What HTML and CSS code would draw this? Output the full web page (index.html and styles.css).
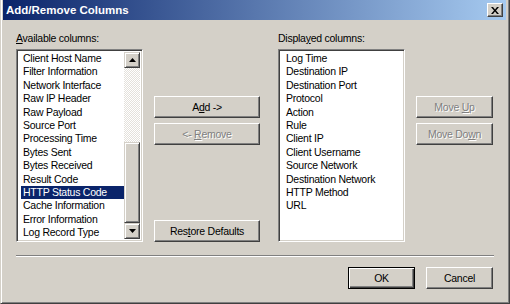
FILE: index.html
```html
<!DOCTYPE html>
<html>
<head>
<meta charset="utf-8">
<link rel="stylesheet" href="styles.css">
</head>
<body>
<div class="window">
  <div class="titlebar">
    <span class="title">Add/Remove Columns</span>
    <span class="close"><svg width="8" height="7" viewBox="0 0 8 7"><path d="M0 0h2l2 2.5L6 0h2L5 3.5 8 7H6L4 4.5 2 7H0l3-3.5z" fill="#000"/></svg></span>
  </div>
  <div class="body">
    <div class="columns">
      <div class="col">
        <div class="label"><u>A</u>vailable columns:</div>
        <div class="listbox">
          <ul class="items">
            <li>Client Host Name</li>
            <li>Filter Information</li>
            <li>Network Interface</li>
            <li>Raw IP Header</li>
            <li>Raw Payload</li>
            <li>Source Port</li>
            <li>Processing Time</li>
            <li>Bytes Sent</li>
            <li>Bytes Received</li>
            <li>Result Code</li>
            <li class="sel">HTTP Status Code</li>
            <li>Cache Information</li>
            <li>Error Information</li>
            <li>Log Record Type</li>
          </ul>
          <div class="scrollbar">
            <div class="sbtn"><svg width="7" height="4" viewBox="0 0 7 4"><path d="M3.5 0L7 4H0z" fill="#000"/></svg></div>
            <div class="track">
              <div class="thumb"></div>
            </div>
            <div class="sbtn"><svg width="7" height="4" viewBox="0 0 7 4"><path d="M0 0h7L3.5 4z" fill="#000"/></svg></div>
          </div>
        </div>
      </div>
      <div class="mid">
        <button class="btn">A<u>d</u>d -&gt;</button>
        <button class="btn disabled">&lt;- <u>R</u>emove</button>
        <button class="btn restore">Res<u>t</u>ore Defaults</button>
      </div>
      <div class="col">
        <div class="label">Displa<u>y</u>ed columns:</div>
        <div class="listbox">
          <ul class="items right">
            <li>Log Time</li>
            <li>Destination IP</li>
            <li>Destination Port</li>
            <li>Protocol</li>
            <li>Action</li>
            <li>Rule</li>
            <li>Client IP</li>
            <li>Client Username</li>
            <li>Source Network</li>
            <li>Destination Network</li>
            <li>HTTP Method</li>
            <li>URL</li>
          </ul>
        </div>
      </div>
      <div class="side">
        <button class="btn disabled">Move <u>U</u>p</button>
        <button class="btn disabled">Move Do<u>w</u>n</button>
      </div>
    </div>
    <div class="separator"></div>
    <div class="footer">
      <button class="btn default">OK</button>
      <button class="btn">Cancel</button>
    </div>
  </div>
</div>
</body>
</html>
```

FILE: styles.css
```css
* { box-sizing: border-box; }
html, body { margin: 0; padding: 0; background: #d4d0c8; }
body { width: 510px; height: 304px; overflow: hidden; }

.window {
  width: 510px;
  height: 304px;
  background: #d4d0c8;
  border-left: 1px solid #d4d0c8;
  border-right: 1px solid #404040;
  border-bottom: 1px solid #404040;
  box-shadow: inset 1px 0 #fff, inset -1px -1px #808080;
  padding: 0 3px 3px 2px;
  font-family: "Liberation Sans", Arial, sans-serif;
  font-size: 10.5px;
  letter-spacing: -0.25px;
  color: #000;
  display: flex;
  flex-direction: column;
}

.titlebar {
  height: 20px;
  background: linear-gradient(to right, #0a246a, #a6caf0);
  display: flex;
  align-items: center;
  justify-content: space-between;
  padding: 0 3px 0 3px;
}
.title {
  color: #fff;
  font-weight: bold;
  font-size: 11.5px;
  letter-spacing: 0;
}
.close {
  width: 16px;
  height: 14px;
  background: #d4d0c8;
  border: 1px solid;
  border-color: #fff #404040 #404040 #fff;
  box-shadow: inset -1px -1px #808080;
  display: flex;
  align-items: center;
  justify-content: center;
}

.body {
  padding: 12px 0 0 13px;
  display: flex;
  flex-direction: column;
}

.columns {
  display: grid;
  grid-template-columns: 127px 113px 127px 77px;
  column-gap: 11px;
}

.col { display: flex; flex-direction: column; }
.label {
  height: 13px;
  line-height: 13px;
  margin-bottom: 4px;
}

.listbox {
  height: 193px;
  background: #fff;
  border: 1px solid;
  border-color: #808080 #fff #fff #808080;
  box-shadow: inset 1px 1px #404040, inset -1px -1px #d4d0c8;
  padding: 2px;
  display: flex;
}
.items {
  list-style: none;
  margin: 0;
  padding: 0;
  flex: 1;
  min-width: 0;
}
.items li {
  height: 13.4px;
  line-height: 13.4px;
  margin-left: 2px;
  padding-left: 2px;
  white-space: nowrap;
}
.items.right li { margin-left: 3px; }
.items li.sel {
  background: #0a246a;
  color: #fff;
}

.scrollbar {
  width: 16px;
  display: flex;
  flex-direction: column;
}
.sbtn {
  width: 16px;
  height: 16px;
  background: #d4d0c8;
  border: 1px solid;
  border-color: #d4d0c8 #404040 #404040 #d4d0c8;
  box-shadow: inset 1px 1px #fff, inset -1px -1px #808080;
  display: flex;
  align-items: center;
  justify-content: center;
}
.track {
  flex: 1;
  background-color: #fff;
  background-image: repeating-conic-gradient(#e4e1db 0 25%, #fff 0 50%);
  background-size: 2px 2px;
  display: flex;
  flex-direction: column;
  justify-content: flex-end;
}
.thumb {
  height: 81px;
  background: #d4d0c8;
  border: 1px solid;
  border-color: #d4d0c8 #404040 #404040 #d4d0c8;
  box-shadow: inset 1px 1px #fff, inset -1px -1px #808080;
}

.btn {
  font-family: inherit;
  font-size: inherit;
  letter-spacing: inherit;
  color: #000;
  height: 22px;
  padding: 0;
  background: #d4d0c8;
  border: 1px solid;
  border-color: #fff #404040 #404040 #fff;
  box-shadow: inset -1px -1px #808080;
  text-align: center;
  line-height: 18px;
}
.btn.disabled {
  color: #808080;
  text-shadow: 1px 1px #fff;
}

.mid {
  display: flex;
  flex-direction: column;
  padding-top: 64px;
  padding-right: 7px;
  gap: 5px;
}
.mid .restore { margin-top: auto; }

.side {
  display: flex;
  flex-direction: column;
  padding-top: 64px;
  gap: 5px;
}

.separator {
  margin-top: 13px;
  width: 478px;
  height: 2px;
  border-top: 1px solid #808080;
  border-bottom: 1px solid #fff;
}

.footer {
  margin-top: 10px;
  width: 477px;
  display: flex;
  justify-content: flex-end;
  gap: 11px;
}
.footer .btn { width: 67px; }
.footer .btn.default {
  border: 1px solid #000;
  box-shadow: inset 1px 1px #fff, inset -1px -1px #404040, inset -2px -2px #808080;
}
```
